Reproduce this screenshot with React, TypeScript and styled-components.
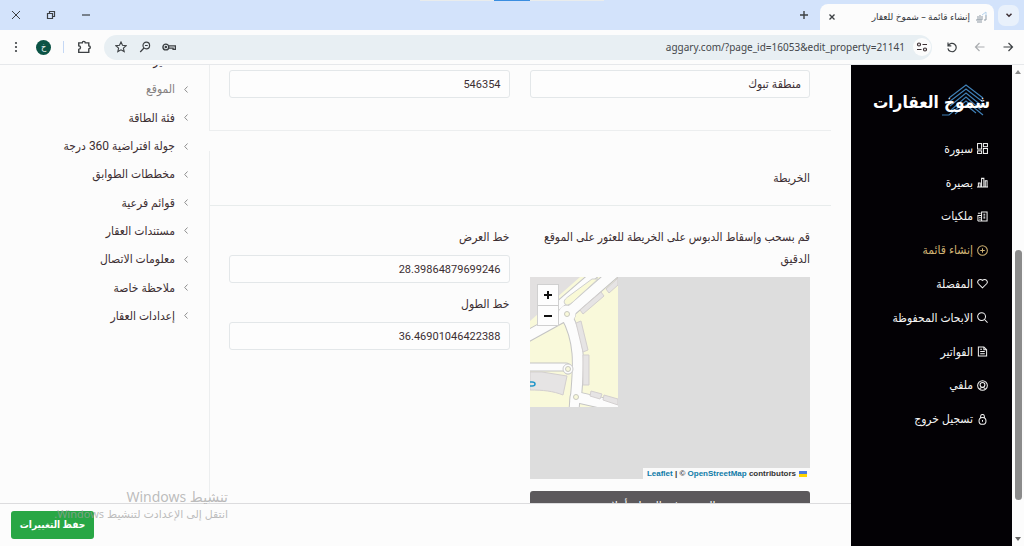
import React from 'react';
import styled, { createGlobalStyle } from 'styled-components';

const arabic = '"DejaVu Sans Condensed", "DejaVu Sans", sans-serif';

const GlobalStyle = createGlobalStyle`
  *, *::before, *::after { box-sizing: border-box; }
  html, body, #root { height: 100%; }
  body {
    margin: 0;
    background: #fcfcfc;
    color: #3c2f33;
    font: 12px/22px Roboto, ${arabic};
    overflow: hidden;
  }
  button, input { font: inherit; color: inherit; }
  button { border: 0; padding: 0; background: none; cursor: pointer; }
  a { color: inherit; text-decoration: none; }
  ul { list-style: none; margin: 0; padding: 0; }
  svg { display: block; flex: none; }
`;

const Window = styled.div`
  position: relative;
  display: flex;
  flex-direction: column;
  height: 100vh;
`;

/* ---------- browser chrome ---------- */

const TabStrip = styled.header`
  position: relative;
  display: flex;
  align-items: center;
  height: 30px;
  padding: 0 5px 0 8px;
  background: #d3e3fb;
`;

const LoadingBar = styled.div`
  position: absolute;
  top: 0;
  left: 41%;
  width: 18%;
  height: 1px;
  background: linear-gradient(to right, #e9ecec 40%, #3a8ee0 40%, #3a8ee0 60%, #e9ecec 60%);
`;

const TabSearch = styled.button`
  display: grid;
  place-items: center;
  width: 21px;
  height: 21px;
  border-radius: 7px;
  background: #e9f1fb;
`;

const Tab = styled.div`
  display: flex;
  align-items: center;
  gap: 6px;
  align-self: flex-end;
  width: 174px;
  height: 26px;
  margin: 0 4px 0 8px;
  padding: 0 6px 0 4px;
  border-radius: 8px 8px 0 0;
  background: #fcfcfc;
`;

const TabTitle = styled.span`
  flex: 1;
  font: 9px/16px "Noto Sans", "DejaVu Sans", sans-serif;
  white-space: nowrap;
  color: #33363b;
`;

const ChromeButton = styled.button`
  display: grid;
  place-items: center;
  width: 16px;
  height: 16px;
  color: #3c4043;
`;

const WindowButtons = styled.div`
  display: flex;
  gap: 19px;
  margin-right: auto;
`;

const Toolbar = styled.div`
  display: flex;
  align-items: center;
  height: 35px;
  padding: 0 8px;
  gap: 12px;
  background: #fcfcfc;
  border-bottom: 1px solid #e6e8eb;
`;

const AddressBar = styled.div`
  display: flex;
  flex: 1;
  align-items: center;
  gap: 8px;
  height: 25px;
  padding: 0 1px 0 9px;
  border-radius: 13px;
  background: #e8eff3;
`;

const SiteInfo = styled.button`
  display: grid;
  place-items: center;
  width: 18px;
  height: 18px;
  border-radius: 50%;
  background: #fcfcfc;
`;

const Url = styled.input`
  flex: 1;
  min-width: 0;
  border: 0;
  padding: 0;
  outline: 0;
  background: none;
  direction: ltr;
  text-align: right;
  font: 10px/20px "Noto Sans", sans-serif;
  color: #44474b;
`;

const Divider = styled.span`
  width: 1px;
  height: 12px;
  background: #c5d8f5;
`;

const Avatar = styled.button`
  width: 15px;
  height: 15px;
  border-radius: 50%;
  background: #0b5345;
  color: #fff;
  font: 9px/13px ${arabic};
`;

/* ---------- page ---------- */

const Body = styled.div`
  display: flex;
  flex: 1;
  min-height: 0;
`;

const ScrollTrack = styled.div`
  display: flex;
  flex-direction: column;
  align-items: center;
  justify-content: space-between;
  width: 12px;
  padding: 5px 0;
  background: #fcfcfc;
`;

const ScrollThumb = styled.div`
  width: 7px;
  height: 53%;
  margin: auto 0 37px;
  border-radius: 4px;
  background: #8b8b8b;
`;

const Sidebar = styled.aside`
  width: 161px;
  padding: 17px 24px 0 22px;
  background: #030105;
  color: #f4f4f4;
`;

const Logo = styled.a`
  position: relative;
  display: block;
  height: 50px;
  margin-right: -2px;
  font: bold 17px/40px ${arabic};
  white-space: nowrap;
  color: #fff;

  svg { position: absolute; top: 2px; right: 3px; }
  span { position: relative; }
`;

const SideList = styled.ul`
  display: grid;
  grid-auto-rows: 1fr;
  height: 304px;
`;

const SideLink = styled.a<{ $active?: boolean }>`
  display: flex;
  align-items: center;
  gap: 4px;
  height: 100%;
  white-space: nowrap;
  color: ${(p) => (p.$active ? '#d0b273' : 'inherit')};
`;

const Main = styled.main`
  display: flex;
  flex: 1;
  flex-direction: column;
  min-width: 0;
`;

const Content = styled.div`
  display: flex;
  flex: 1;
  min-height: 0;
  padding-right: 20px;
  overflow: hidden;
`;

const Form = styled.form`
  flex: 1;
  min-width: 0;
`;

const Card = styled.section`
  border: 1px solid #eceeef;
  border-width: 0 0 1px 1px;

  & + & { margin-top: 20px; border-bottom: 0; }
`;

const CardTitle = styled.h2`
  margin: 0;
  padding: 0 21px;
  border-bottom: 1px solid #e8ecec;
  font-size: 12px;
  font-weight: normal;
  line-height: 54px;
`;

const Fields = styled.div<{ $top: number }>`
  display: grid;
  grid-template-columns: 1fr 1fr;
  gap: 20px;
  padding: ${(p) => p.$top}px 21px 32px 19px;
`;

const Field = styled.div`
  & + & { margin-top: 10px; }
`;

const Label = styled.label`
  display: block;
  margin-bottom: 7px;
`;

const TextInput = styled.input<{ $numeric?: boolean }>`
  display: block;
  width: 100%;
  height: 28px;
  padding: 0 8px;
  border: 1px solid #e3e7e9;
  border-radius: 3px;
  background: #fdfdfd;
  outline: 0;
  font-size: ${(p) => (p.$numeric ? 11 : 12)}px;
`;

const MapBox = styled.div`
  position: relative;
  height: 202px;
  background: #ddd;
  direction: ltr;
`;

const ZoomControl = styled.div`
  position: absolute;
  top: 8px;
  left: 8px;
  display: grid;
  width: 20px;
  background: #fdfdfd;
  box-shadow: 0 0 0 1px #d0d0d0;

  button { height: 20px; display: grid; place-items: center; color: #111; }
  button + button { border-top: 1px solid #ccc; }
`;

const Attribution = styled.div`
  position: absolute;
  right: 0;
  bottom: 0;
  display: flex;
  gap: 3px;
  align-items: center;
  height: 11px;
  padding: 0 3px 0 4px;
  background: #fafafa;
  font: bold 8px/11px "Liberation Sans", sans-serif;
  white-space: nowrap;
  color: #333;

  a { color: #0f7ba8; }
`;

const PinButton = styled.button`
  display: block;
  width: 100%;
  height: 29px;
  margin-top: 12px;
  border-radius: 3px;
  background: #5c595c;
  color: #fff;
`;

const SectionNav = styled.nav`
  width: 209px;
  padding-right: 21px;
  overflow: hidden;

  ul {
    display: grid;
    grid-auto-rows: 1fr;
    height: 283px;
    margin-top: -18px;
  }
`;

const SectionLink = styled.a<{ $active?: boolean }>`
  display: flex;
  align-items: center;
  gap: 9px;
  height: 100%;
  white-space: nowrap;
  color: ${(p) => (p.$active ? '#85807f' : 'inherit')};

  svg { color: #8d8d8d; }
`;

const SaveBar = styled.footer`
  display: flex;
  justify-content: flex-end;
  align-items: flex-start;
  height: 43px;
  padding: 7px 11px;
  border-top: 1px solid #dcdcde;
`;

const SaveButton = styled.button`
  width: 83px;
  height: 28px;
  border-radius: 3px;
  background: #28a745;
  color: #fff;
  font-size: 10px;
  font-weight: bold;
`;

const Watermark = styled.div`
  position: absolute;
  left: 52px;
  bottom: 24px;
  width: 176px;
  font: 11px/16px "Noto Sans", "DejaVu Sans", sans-serif;
  white-space: nowrap;
  color: rgba(160, 160, 160, 0.7);
  pointer-events: none;

  strong { display: block; font-size: 14px; font-weight: normal; line-height: 18px; }
`;

/* ---------- icons ---------- */

type IconProps = { size?: number; w?: number; children: React.ReactNode };
const Icon = ({ size = 12, w = 1.2, children }: IconProps) => (
  <svg width={size} height={size} viewBox="0 0 12 12" fill="none" stroke="currentColor" strokeWidth={w} aria-hidden="true">
    {children}
  </svg>
);

const sideItems: { label: string; icon: React.ReactNode; active?: boolean }[] = [
  { label: 'سبورة', icon: <><rect x=".6" y=".6" width="4.400" height="6" /><rect x="7" y=".6" width="4.400" height="3.400" /><rect x=".6" y="8.600" width="4.400" height="2.800" /><rect x="7" y="6" width="4.400" height="5.400" /></> },
  { label: 'بصيرة', icon: <><path d="M0 11h12M1.500 11V6.500h2V11M5 11V1.500h2.500V11M9 11V4h2v7" /></> },
  { label: 'ملكيات', icon: <><path d="M5 11V1h6v10zM1 11V5h4M1 11h10M7 3.500h2M7 5.500h2M7 7.500h2M2.500 7H4M2.500 9H4M1 2.500h3" /></> },
  { label: 'إنشاء قائمة', active: true, icon: <><circle cx="6" cy="6" r="5.300" /><path d="M6 3.500v5M3.500 6h5" /></> },
  { label: 'المفضلة', icon: <path d="M6 10.800 1.500 6.300C-.6 3.800 2.800-.6 6 2.700 9.200-.6 12.600 3.800 10.500 6.300z" /> },
  { label: 'الابحاث المحفوظة', icon: <><circle cx="5" cy="5" r="4.300" /><path d="m8.200 8.200 3.300 3.300" /></> },
  { label: 'الفواتير', icon: <><path d="M1.500 1h6l3 3v7h-9zM7.500 1v3h3M3.500 6h5M3.500 8.500h5M3.500 3.500h2" /></> },
  { label: 'ملفي', icon: <><circle cx="6" cy="6" r="5.300" /><circle cx="6" cy="5.200" r="2.600" /><path d="M2.800 10c1-2.600 5.400-2.600 6.400 0" /></> },
  { label: 'تسجيل خروج', icon: <><circle cx="6" cy="7.500" r="3.800" /><path d="M4 4.300V2.500a2 2 0 0 1 4 0v1.800M6 6.500v2" /></> },
];

const sectionItems = [
  'الميزات',
  'الموقع',
  'فئة الطاقة',
  'جولة افتراضية 360 درجة',
  'مخططات الطوابق',
  'قوائم فرعية',
  'مستندات العقار',
  'معلومات الاتصال',
  'ملاحظة خاصة',
  'إعدادات العقار',
];

const LogoMark = () => (
  <svg width="46" height="34" viewBox="0 0 46 34" fill="none" stroke="#3f7fb5" strokeWidth="1.200" aria-hidden="true">
    <path d="M8 14 25 1l17 13M8 18 25 5l17 13M9 22 25 9l16 13M10 26 25 13l15 13M1 31h7l17-14 17 14M14 30l11-9 10 8" />
  </svg>
);

const MapTile = () => (
  <svg width="88" height="130" viewBox="0 0 88 130" aria-hidden="true">
    <rect width="88" height="130" fill="#f9f9da" />
    <path d="M0 0h50L0 44z" fill="#e2e0e0" />
    <g fill="none" stroke="#c4c4c4" strokeLinecap="round">
      <path d="M-4 60 36 38 84-4M36 38c16 28 12 56 10 82l44 10" strokeWidth="12" />
      <path d="M22 34 66-4M-2 90h38" strokeWidth="9" />
      <circle cx="37" cy="37" r="6" strokeWidth="6" />
      <circle cx="38" cy="92" r="5" />
      <path d="M45 120 44 134" strokeWidth="11" />
    </g>
    <g fill="none" stroke="#fcfcfc" strokeLinecap="round">
      <path d="M-4 60 36 38 84-4M36 38c16 28 12 56 10 82l44 10" strokeWidth="10" />
      <path d="M22 34 66-4M-2 90h38" strokeWidth="7" />
      <circle cx="37" cy="37" r="5" strokeWidth="7" />
      <path d="M45 120 44 134" strokeWidth="9" />
    </g>
    <path d="M35 27c-2-3 0-5 4-8L62 2h6L46 22c-3 3-8 8-11 5z" fill="#f9f9d6" stroke="#cfcfcf" />
    <circle cx="38" cy="92" r="5" fill="#fcfcfc" stroke="#ccc" />
    <g fill="#f9f9da" stroke="#c8c8c0">
      <circle cx="37" cy="37" r="2.500" />
      <circle cx="38" cy="92" r="2.500" />
      <circle cx="46" cy="120" r="2.500" />
    </g>
    <g fill="#e6e4e4" stroke="#d3cfcf">
      <path d="m50 33 21-18 3 4-21 18zM76 12 88 1v7l-9 8zM46 46l5-2 7 29-5 2zM53 78h6v30h-6zM61 114l11 3-2 5-10-3zM74 118l14 4v6l-15-5z" />
      <path d="M0 95h12l25 4-4 19c-10-4-20-5-33-5z" />
    </g>
    <path d="M0 105h2q3 0 3 2t-3 2H0" fill="none" stroke="#2196c9" strokeWidth="1.500" />
  </svg>
);

export default function App() {
  return (
    <Window dir="rtl">
      <GlobalStyle />
      <TabStrip>
        <LoadingBar />
        <TabSearch aria-label="بحث في علامات التبويب">
          <Icon size={10} w={1.800}><path d="m3 4.500 3 3 3-3" /></Icon>
        </TabSearch>
        <Tab>
          <svg width="12" height="12" viewBox="0 0 12 12" fill="none" stroke="#8f9aa5" aria-hidden="true">
            <path d="M0 9h2V5M4 9V4M6 9V5M8 9h2V4M2 9h4M1 11h5" />
            <path d="m6 4 4-3v4" stroke="#b7d3ec" />
          </svg>
          <TabTitle>إنشاء قائمة – شموخ للعقار</TabTitle>
          <ChromeButton aria-label="إغلاق علامة التبويب">
            <Icon size={10} w={1.600}><path d="m3 3 6 6M9 3 3 9" /></Icon>
          </ChromeButton>
        </Tab>
        <ChromeButton aria-label="علامة تبويب جديدة">
          <Icon w={1.400}><path d="M6 2v8M2 6h8" /></Icon>
        </ChromeButton>
        <WindowButtons>
          <ChromeButton aria-label="تصغير"><Icon><path d="M2 6h8" /></Icon></ChromeButton>
          <ChromeButton aria-label="استعادة"><Icon><path d="M2.500 4.500h5v5h-5zM4.500 4V2.500h5v5H8" /></Icon></ChromeButton>
          <ChromeButton aria-label="إغلاق"><Icon w={1}><path d="m2 2 8 8M10 2l-8 8" /></Icon></ChromeButton>
        </WindowButtons>
      </TabStrip>

      <Toolbar>
        <ChromeButton aria-label="رجوع"><Icon><path d="M1.500 6h9M6.500 2l4 4-4 4" /></Icon></ChromeButton>
        <ChromeButton aria-label="تقدم"><Icon><path d="M10.500 6h-9M5.500 2l-4 4 4 4" stroke="#a9acaf" /></Icon></ChromeButton>
        <ChromeButton aria-label="إعادة تحميل"><Icon><path d="M2 1.500v3.300h3.300M2.200 4.800a4.200 4.200 0 1 1-.3 2.500" /></Icon></ChromeButton>
        <AddressBar>
          <SiteInfo aria-label="معلومات الموقع">
            <Icon><circle cx="3" cy="3.500" r="1.500" /><path d="M6.500 3.500H11M1 8.500h4.500" /><circle cx="9" cy="8.500" r="1.500" /></Icon>
          </SiteInfo>
          <Url aria-label="العنوان" defaultValue="aggary.com/?page_id=16053&edit_property=21141" />
          <ChromeButton aria-label="كلمات المرور"><Icon size={14}><circle cx="3.300" cy="6" r="2.500" /><circle cx="3.300" cy="6" r=".5" /><path d="M5.800 5H11.500v3H9.500V7H5.800" /></Icon></ChromeButton>
          <ChromeButton aria-label="تكبير"><Icon><circle cx="7.300" cy="4.500" r="3.300" /><path d="M5 7 1.200 11M6 4.500h2.700" /></Icon></ChromeButton>
          <ChromeButton aria-label="إشارة مرجعية"><Icon w={1.100}><path d="m6 1 1.500 3.300 3.600.4-2.700 2.400.8 3.500L6 8.800l-3.200 1.800.8-3.500L.9 4.700l3.600-.4z" /></Icon></ChromeButton>
        </AddressBar>
        <ChromeButton aria-label="الإضافات"><Icon size={14}><path d="M1.500 2.500h3a1.300 1.300 0 0 1 2.600 0h3V5a1.300 1.300 0 0 1 0 2.600v3H1.500V8a1.500 1.500 0 0 0 0-3z" /></Icon></ChromeButton>
        <Divider />
        <Avatar aria-label="الملف الشخصي">خ</Avatar>
        <ChromeButton aria-label="المزيد"><Icon><g fill="currentColor" stroke="none"><circle cx="6" cy="2" r="1.100" /><circle cx="6" cy="6" r="1.100" /><circle cx="6" cy="10" r="1.100" /></g></Icon></ChromeButton>
      </Toolbar>

      <Body>
        <ScrollTrack>
          <svg width="6" height="4" viewBox="0 0 6 4" aria-hidden="true"><path d="m0 4 3-4 3 4z" fill="#8b8b8b" /></svg>
          <ScrollThumb />
          <svg width="6" height="4" viewBox="0 0 6 4" aria-hidden="true"><path d="m0 0 3 4 3-4z" fill="#666" /></svg>
        </ScrollTrack>
        <Sidebar>
          <Logo href="#home"><LogoMark /><span>شموخ العقارات</span></Logo>
          <SideList>
            {sideItems.map((item) => (
              <li key={item.label}>
                <SideLink href="#" $active={item.active}>
                  <Icon size={11} w={1.100}>{item.icon}</Icon>
                  {item.label}
                </SideLink>
              </li>
            ))}
          </SideList>
        </Sidebar>

        <Main>
          <Content>
            <Form>
              <Card>
                <Fields $top={5}>
                  <TextInput aria-label="المنطقة" defaultValue="منطقة تبوك" />
                  <TextInput $numeric aria-label="الرمز البريدي" defaultValue="546354" />
                </Fields>
              </Card>
              <Card>
                <CardTitle>الخريطة</CardTitle>
                <Fields $top={20}>
                  <div>
                    <Label as="div">قم بسحب وإسقاط الدبوس على الخريطة للعثور على الموقع الدقيق</Label>
                    <MapBox>
                      <MapTile />
                      <ZoomControl>
                        <button type="button" aria-label="تكبير الخريطة"><Icon w={2}><path d="M6 2v8M2 6h8" /></Icon></button>
                        <button type="button" aria-label="تصغير الخريطة"><Icon w={2}><path d="M2 6h8" /></Icon></button>
                      </ZoomControl>
                      <Attribution>
                        <span><a href="#leaflet">Leaflet</a> | © <a href="#osm">OpenStreetMap</a> contributors</span>
                        <svg width="8" height="6" viewBox="0 0 8 6" aria-hidden="true"><path d="M0 0h8v3H0z" fill="#4c7be1" /><path d="M0 3h8v3H0z" fill="#ffd500" /></svg>
                      </Attribution>
                    </MapBox>
                    <PinButton type="button">ضع الدبوس في العنوان أعلاه</PinButton>
                  </div>
                  <div>
                    <Field>
                      <Label htmlFor="lat">خط العرض</Label>
                      <TextInput $numeric id="lat" defaultValue="28.39864879699246" />
                    </Field>
                    <Field>
                      <Label htmlFor="lng">خط الطول</Label>
                      <TextInput $numeric id="lng" defaultValue="36.46901046422388" />
                    </Field>
                  </div>
                </Fields>
              </Card>
            </Form>
            <SectionNav>
              <ul>
                {sectionItems.map((label, i) => (
                  <li key={label}>
                    <SectionLink href="#" $active={i === 1}>
                      <svg width="4" height="7" viewBox="0 0 4 7" fill="none" stroke="currentColor" aria-hidden="true"><path d="M3.500.5.700 3.500l2.800 3" /></svg>
                      {label}
                    </SectionLink>
                  </li>
                ))}
              </ul>
            </SectionNav>
          </Content>
          <SaveBar>
            <SaveButton type="button">حفظ التغييرات</SaveButton>
          </SaveBar>
        </Main>
      </Body>
      <Watermark><strong>تنشيط Windows</strong>انتقل إلى الإعدادت لتنشيط Windows.</Watermark>
    </Window>
  );
}
